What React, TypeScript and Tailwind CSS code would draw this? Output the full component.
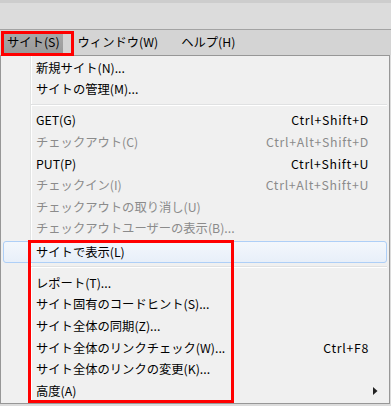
type Row =
  | { kind: "item"; label: string; shortcut?: string; disabled?: boolean; hot?: boolean; sub?: boolean }
  | { kind: "sep" };

const rows: Row[] = [
  { kind: "item", label: "新規サイト(N)..." },
  { kind: "item", label: "サイトの管理(M)..." },
  { kind: "sep" },
  { kind: "item", label: "GET(G)", shortcut: "Ctrl+Shift+D" },
  { kind: "item", label: "チェックアウト(C)", shortcut: "Ctrl+Alt+Shift+D", disabled: true },
  { kind: "item", label: "PUT(P)", shortcut: "Ctrl+Shift+U" },
  { kind: "item", label: "チェックイン(I)", shortcut: "Ctrl+Alt+Shift+U", disabled: true },
  { kind: "item", label: "チェックアウトの取り消し(U)", disabled: true },
  { kind: "item", label: "チェックアウトユーザーの表示(B)...", disabled: true },
  { kind: "item", label: "サイトで表示(L)", hot: true },
  { kind: "sep" },
  { kind: "item", label: "レポート(T)..." },
  { kind: "item", label: "サイト固有のコードヒント(S)..." },
  { kind: "item", label: "サイト全体の同期(Z)..." },
  { kind: "item", label: "サイト全体のリンクチェック(W)...", shortcut: "Ctrl+F8" },
  { kind: "item", label: "サイト全体のリンクの変更(K)..." },
  { kind: "item", label: "高度(A)", sub: true },
];

function MenuRow({ row }: { row: Row }) {
  if (row.kind === "sep") {
    return (
      <div className="flex h-[9.6px] items-center pl-[30px] pr-[2px]">
        <div className="h-[2px] flex-1 border-t border-[#e0e1e2] bg-white" />
      </div>
    );
  }
  if (row.hot) {
    return (
      <div className="mx-[2px] mt-[1.6px] flex h-[21.6px] items-center rounded-[3px] border border-[#aecff7] bg-gradient-to-b from-[#f3f7fc] to-[#e8eff9] pl-[32px]">
        <span>{row.label}</span>
      </div>
    );
  }
  return (
    <div className={`flex h-[21.6px] items-center pl-[35px] pr-[20px] ${row.disabled ? "text-[#8b8b8b]" : "text-black"}`}>
      <span className="flex-1">{row.label}</span>
      {row.shortcut && <span className="tracking-[0.7px]">{row.shortcut}</span>}
      {row.sub && (
        <svg width="5" height="8" viewBox="0 0 5 8" className="mr-[-9px]">
          <path d="M0 0 L4.5 4 L0 8 Z" fill="#222" />
        </svg>
      )}
    </div>
  );
}

export default function App() {
  return (
    <div
      className="relative h-[406px] w-[391px] overflow-hidden bg-[#dcdcdc] text-[12.3px] leading-none text-black"
      style={{ fontFamily: '"Noto Sans CJK JP", sans-serif' }}
    >
      <div className="h-[3px] bg-[#cdcdcd]" />
      <div className="h-[26px]" />
      <div className="flex h-[26px] items-center border-t border-[#a3a3a3] bg-[#d4d4d4] pl-[4px]">
        <div className="flex h-[22px] items-center bg-gradient-to-b from-[#a9a9a9] to-[#9a9a9a] px-[3px]">サイト(S)</div>
        <div className="ml-[15px]">ウィンドウ(W)</div>
        <div className="ml-[23px]">ヘルプ(H)</div>
      </div>
      <div className="relative mr-[1px] border border-[#979797] bg-[#f0f0f0] pb-[1px] pt-[1px]">
        <div className="absolute bottom-0 left-[29px] top-0 w-[2px] border-l border-[#e2e3e3] bg-white" />
        <div className="relative">
          {rows.map((r, i) => (
            <MenuRow key={i} row={r} />
          ))}
        </div>
      </div>
      <div className="absolute left-[1px] top-[31px] h-[25px] w-[73px] border-[3px] border-[#ff0000]" />
      <div className="absolute left-[28px] top-[240px] h-[163px] w-[206px] border-[3px] border-[#ff0000]" />
    </div>
  );
}
